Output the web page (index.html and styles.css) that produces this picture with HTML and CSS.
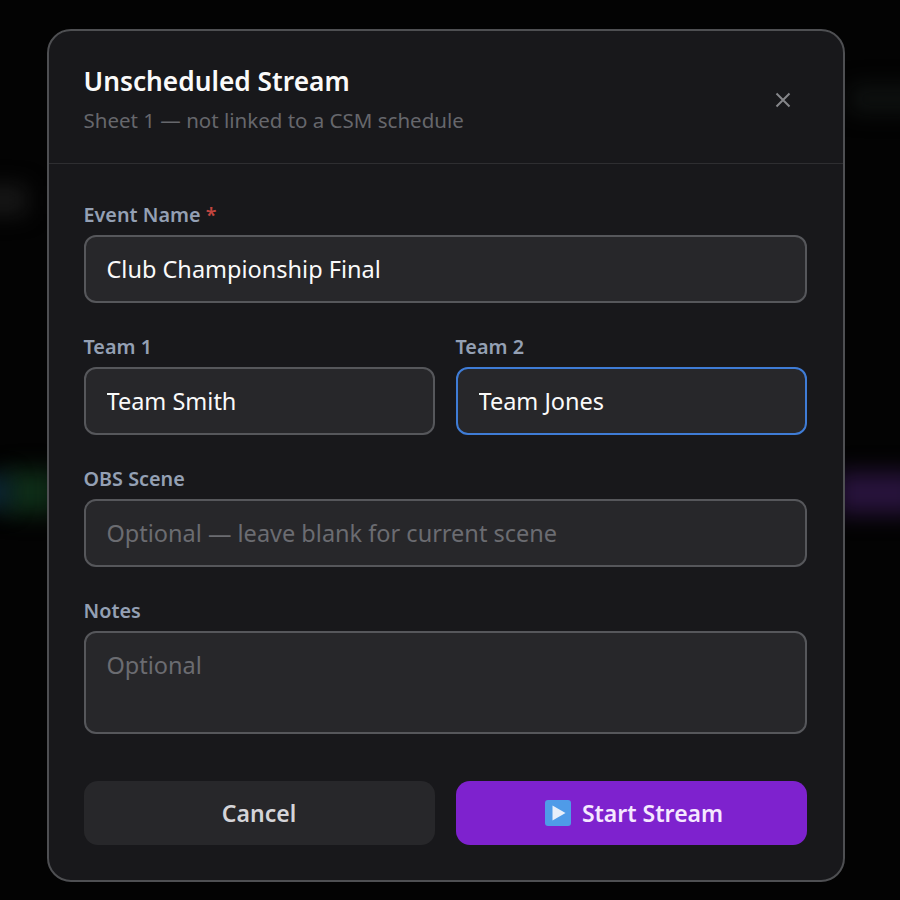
FILE: index.html
```html
<!DOCTYPE html>
<html lang="en">
<head>
  <meta charset="UTF-8" />
  <title>Unscheduled Stream</title>
  <link rel="stylesheet" href="styles.css">
</head>
<body>
  <div class="backdrop">
    <span class="glow glow-title"></span>
    <span class="glow glow-top"></span>
    <span class="glow glow-green"></span>
    <span class="glow glow-blue"></span>
    <span class="glow glow-purple"></span>
  </div>
  <div class="modal">
    <div class="modal-header">
      <div>
        <h2>Unscheduled Stream</h2>
        <p>Sheet 1 — not linked to a CSM schedule</p>
      </div>
      <button class="close-btn" aria-label="Close">
        <svg width="16" height="16" viewBox="0 0 16 16"><path d="M1.500 1.500 14.500 14.500M14.500 1.500 1.500 14.500" /></svg>
      </button>
    </div>
    <div class="modal-body">
      <div class="field">
        <label>Event Name <span class="required">*</span></label>
        <input type="text" value="Club Championship Final">
      </div>
      <div class="field-row">
        <div class="field">
          <label>Team 1</label>
          <input type="text" value="Team Smith">
        </div>
        <div class="field">
          <label>Team 2</label>
          <input class="focused" type="text" value="Team Jones">
        </div>
      </div>
      <div class="field">
        <label>OBS Scene</label>
        <input type="text" placeholder="Optional — leave blank for current scene">
      </div>
      <div class="field">
        <label>Notes</label>
        <textarea placeholder="Optional"></textarea>
      </div>
      <div class="actions">
        <button class="cancel-btn">Cancel</button>
        <button class="start-btn">
          <svg width="26" height="26" viewBox="0 0 26 26">
            <rect width="26" height="26" rx="3" fill="#4f9be8" />
            <path d="M7.500 5.500 20.500 13 7.500 20.500Z" fill="#e8effa" />
          </svg>
          Start Stream
        </button>
      </div>
    </div>
  </div>
</body>
</html>
```

FILE: styles.css
```css
* {
  box-sizing: border-box;
}
html, body {
  height: 100%;
}
body {
  margin: 0;
  background: #030303;
  font-family: 'Noto Sans', 'Open Sans', sans-serif;
  display: flex;
  justify-content: center;
  align-items: flex-start;
  padding: 29px 9px 0 0;
  overflow: hidden;
}
.backdrop {
  position: absolute;
  inset: 0;
  overflow: hidden;
}
.glow {
  position: absolute;
  display: block;
  filter: blur(11px);
}
.glow-title {
  left: -20px;
  top: 186px;
  width: 46px;
  height: 28px;
  background: #191919;
}
.glow-top {
  left: 850px;
  top: 86px;
  width: 70px;
  height: 26px;
  background: #0f1211;
}
.glow-green {
  left: 4px;
  top: 470px;
  width: 54px;
  height: 44px;
  background: #0e2c17;
}
.glow-blue {
  left: -22px;
  top: 476px;
  width: 32px;
  height: 32px;
  background: #0d2a38;
}
.glow-purple {
  left: 836px;
  top: 472px;
  width: 84px;
  height: 42px;
  background: #28133c;
}
.modal {
  position: relative;
  width: 798px;
  height: 853px;
  background: #18181b;
  border: 2px solid #4e4f52;
  border-radius: 24px;
}
.modal-header {
  height: 133px;
  padding: 30px 35px 0;
  border-bottom: 1px solid #2e2e31;
  display: flex;
  justify-content: space-between;
}
.modal-header h2 {
  margin: 0;
  font-size: 26.300px;
  line-height: 40px;
  font-weight: 600;
  color: #fafafa;
}
.modal-header p {
  margin: 4px 0 0;
  font-size: 20.500px;
  line-height: 30px;
  color: #66676c;
}
.close-btn {
  background: none;
  border: none;
  padding: 0;
  width: 16px;
  height: 16px;
  margin: 31px 17px 0 0;
}
.close-btn svg {
  display: block;
  fill: none;
  stroke: #85868a;
  stroke-width: 2;
}
.modal-body {
  padding: 36px 36px 0 35px;
}
.field {
  margin-bottom: 29px;
  flex: 1;
}
.field-row {
  display: flex;
  gap: 21px;
}
label {
  display: block;
  font-size: 19.800px;
  line-height: 30px;
  font-weight: 600;
  color: #94a0b4;
  margin-bottom: 5px;
}
.required {
  color: #c2453f;
}
input, textarea {
  display: block;
  width: 100%;
  height: 68px;
  padding: 0 21px 1px;
  background: #27272a;
  border: 2px solid #56575b;
  border-radius: 12px;
  font-family: inherit;
  font-size: 23.500px;
  color: #fafafa;
  outline: none;
}
textarea {
  height: 103px;
  padding-top: 14px;
  line-height: 36px;
  resize: none;
}
input::placeholder, textarea::placeholder {
  color: #6b6c71;
  opacity: 1;
}
input.focused {
  border-color: #3f7cd6;
}
.actions {
  display: flex;
  gap: 21px;
  margin-top: 47px;
}
.actions button {
  flex: 1;
  height: 64px;
  padding: 0 0 1px;
  border: none;
  border-radius: 14px;
  font-family: inherit;
  font-size: 23px;
  font-weight: 600;
  display: flex;
  align-items: center;
  justify-content: center;
  gap: 11px;
}
.cancel-btn {
  background: #27272a;
  color: #d4d4d8;
}
.start-btn {
  background: #7e22ce;
  color: #f5e8ff;
}
.start-btn svg {
  margin-left: 6px;
}
```
